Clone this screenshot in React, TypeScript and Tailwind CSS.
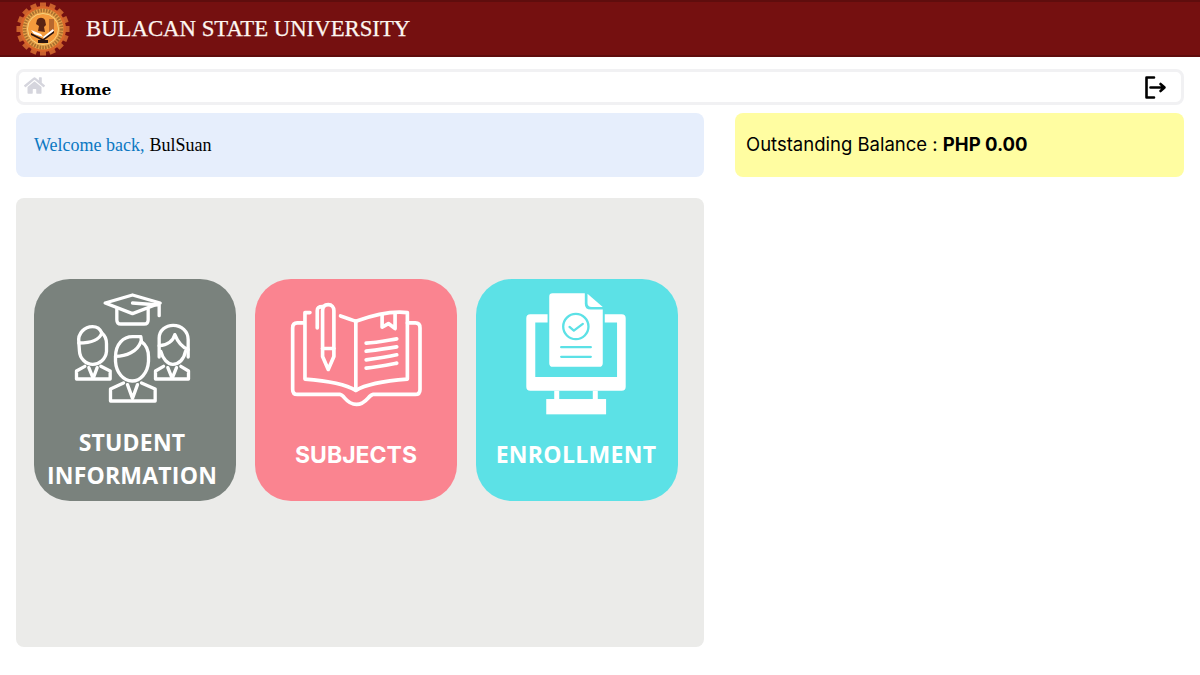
import { FaHome } from 'react-icons/fa'

const serif = "font-['Liberation_Serif',serif]"

function Logo() {
  const teeth = Array.from({ length: 16 }, (_, i) => i * 22.5)
  return (
    <svg viewBox="0 0 54 54" className="w-[54px] h-[54px] shrink-0">
      {teeth.map(a => (
        <rect key={a} x="24" y="0.5" width="6" height="5.5" fill="#c9602c" transform={`rotate(${a} 27 27)`} />
      ))}
      <circle cx="27" cy="27" r="23" fill="#d9662a" />
      <circle cx="27" cy="27" r="20.5" fill="#e9a24a" />
      <circle cx="27" cy="27" r="18.5" fill="none" stroke="#8a5a22" strokeWidth="3.5" strokeDasharray="1.6 1.2" opacity="0.7" />
      <circle cx="27" cy="27" r="15.5" fill="#f49a3c" />
      <circle cx="27" cy="27" r="15.5" fill="none" stroke="#f6d27a" strokeWidth="1" />
      <path d="M21 18c2-3 6-3 8 0l1 5-2 2 1 5-7-1 1-5-3-2z" fill="#5a2412" />
      <rect x="33" y="17" width="5" height="13" fill="#b8682e" />
      <path d="M15 28l10 4 2 3-9-3z" fill="#fff" />
      <path d="M27 35l10-8 1 2-10 8z" fill="#fff" />
      <path d="M15 31l12 6 11-8v2l-11 8-12-6z" fill="#2a1410" />
      <rect x="22" y="38" width="10" height="3" fill="#2a1410" />
    </svg>
  )
}

function StudentsIcon() {
  return (
    <svg viewBox="160 70 350 330" fill="none" stroke="#fff" strokeWidth="10" strokeLinejoin="round" strokeLinecap="round" className="w-[117px] h-[110px]">
      {/* cap */}
      <path d="M253 100 335 76 418 100 335 132Z" />
      <path d="M335 100 415 106V138" />
      <path d="M288 118V150Q288 163 300 163H370Q382 163 382 150V118" />
      {/* left student */}
      <path d="M174 218C170 190 192 171 215 171 228 171 238 178 243 190 253 198 257 208 257 222V245C255 268 236 284 216 284 195 284 177 266 176 245Z" />
      <path d="M174 220C205 220 235 212 243 190" />
      <path d="M192 290 167 304V328H268V304L240 290" />
      <path d="M204 294 217 326 229 294" />
      {/* centre student */}
      <path d="M284 262C284 222 308 201 335 201H360L362 216C376 226 383 242 383 262V275C381 310 358 334 334 334 307 334 286 308 284 275Z" />
      <path d="M284 260C315 260 350 246 360 216" />
      <path d="M308 340 269 358V394H403V358L362 340" />
      <path d="M320 345 335 386 350 345" />
      {/* right student */}
      <path d="M415 262V205C415 182 435 167 457 167 482 167 502 185 502 210V262" />
      <path d="M420 245C426 268 440 284 456 284 474 284 490 268 494 245" />
      <path d="M415 228C440 228 458 212 462 195 470 215 482 232 502 240" />
      <path d="M428 290 404 304V328H503V304L480 290" />
      <path d="M441 294 454 326 467 294" />
    </svg>
  )
}

function BookIcon() {
  return (
    <svg viewBox="120 90 400 320" fill="none" stroke="#fff" strokeWidth="11" strokeLinejoin="round" strokeLinecap="round" className="w-[133px] h-[107px]">
      <path d="M163 155H142Q128 155 128 170V355Q128 370 142 370H270C285 372 288 400 320 400 350 400 355 372 370 370H497Q511 370 511 355V170Q511 155 497 155H473" />
      <path d="M180 124H165V324C220 328 280 335 318 358 355 335 420 328 473 324V124C440 120 390 124 318 150 305 145 290 140 272 134" />
      <path d="M318 150V358" />
      <path d="M397 130V168L416 157 436 172V125" />
      <path d="M349 216C380 214 410 208 441 203M349 240C380 236 410 232 441 227M349 266C380 262 410 258 441 251M349 291C380 288 410 282 441 276" />
      {/* pen */}
      <path d="M202 170V118C202 108 208 106 218 106" />
      <path d="M218 256V118C218 106 224 100 235 100 246 100 252 108 252 118V256L235 295Z" />
      <path d="M218 232H252" />
    </svg>
  )
}

function EnrollIcon() {
  return (
    <svg viewBox="165 65 305 370" className="w-[102px] h-[123px]">
      <path fillRule="evenodd" fill="#fff" d="M180 132H232V157H195V321H441V157H404V132H455Q467 132 467 144V350Q467 362 455 362H180Q168 362 168 350V144Q168 132 180 132Z" />
      <rect x="252" y="362" width="15" height="26" fill="#fff" />
      <rect x="368" y="362" width="15" height="26" fill="#fff" />
      <rect x="228" y="387" width="180" height="46" fill="#fff" />
      <path fill="#fff" d="M247 69H344V100Q344 118 362 118H398V279Q398 290 387 290H248Q237 290 237 279V79Q237 69 247 69Z" />
      <path fill="#fff" d="M352 70 398 110H365Q352 110 352 97Z" />
      <circle cx="317" cy="169" r="38" fill="none" stroke="#5ce1e6" strokeWidth="7" />
      <path d="M298 170 311 181 338 161" fill="none" stroke="#5ce1e6" strokeWidth="7" strokeLinecap="round" strokeLinejoin="round" />
      <path d="M273 231H362M273 260H362" stroke="#5ce1e6" strokeWidth="7" strokeLinecap="round" />
    </svg>
  )
}

function LogoutIcon() {
  return (
    <svg viewBox="0 0 24 24" fill="none" stroke="#000" strokeWidth="2.6" strokeLinecap="round" strokeLinejoin="round" className="w-6 h-6">
      <path d="M11 2.5H3.5V22.5H11" />
      <path d="M7.5 12.5H21.5M17.5 9 21.5 12.5 17.5 16" />
    </svg>
  )
}

const tiles = [
  { label: ['STUDENT', 'INFORMATION'], bg: 'bg-[#7a827d] pr-[6px]', Icon: StudentsIcon, iconBox: 'pt-[14px] h-[137px]', text: "pt-[10px] font-['Open_Sans',sans-serif] tracking-[0.2px]" },
  { label: ['SUBJECTS'], bg: 'bg-[#fa8490]', Icon: BookIcon, iconBox: 'pt-[22px] h-[137px]', text: "pt-[23px] font-['Inter',sans-serif]" },
  { label: ['ENROLLMENT'], bg: 'bg-[#5ce1e6] pr-[2px]', Icon: EnrollIcon, iconBox: 'pt-[13px] h-[137px]', text: "pt-[22px] font-['Open_Sans',sans-serif] tracking-[0.3px]" },
]

export default function App() {
  return (
    <div className="h-[675px] w-[1200px] bg-white overflow-hidden">
      <header className="h-[57px] bg-[#751010] border-t-2 border-b-2 border-t-[#5f0d0d] border-b-[#5f0d0d] flex items-center pl-4 gap-4">
        <Logo />
        <span className={`${serif} text-[#fdf6f0] text-[22.75px] mt-[2px] [-webkit-text-stroke:0.25px_#fdf6f0]`}>BULACAN STATE UNIVERSITY</span>
      </header>

      <div className="px-4">
        <nav className="mt-3 h-9 bg-white border-[3px] border-[#f1f1f3] rounded-lg flex items-center pl-[5px] pr-[14px]">
          <FaHome className="text-[#d5d5dd] w-[21px] h-[21px] -mt-[4px]" />
          <span className="font-['DejaVu_Serif',serif] font-bold text-[15.5px] text-black ml-[15px] mt-[5px]">Home</span>
          <span className="ml-auto"><LogoutIcon /></span>
        </nav>

        <div className="mt-2 flex gap-[31px]">
          <div className="flex flex-col w-[688px]">
            <div className={`${serif} h-16 bg-[#e6eefc] rounded-lg flex items-center pl-[18px] text-[18px]`}>
              <span className="text-[#0b78c2] mr-[5px]">Welcome back,</span>
              <span className="text-black">BulSuan</span>
            </div>

            <section className="mt-[21px] h-[449px] bg-[#ebebe9] rounded-lg flex items-start pt-[81px] pl-[18px] gap-[19px]">
              {tiles.map(({ label, bg, Icon, iconBox, text }) => (
                <div key={label[0]} className={`${bg} w-[202px] h-[222px] rounded-[36px] flex flex-col items-center`}>
                  <div className={`${iconBox} flex justify-center`}><Icon /></div>
                  <div className={`${text} font-bold text-white text-[23px] leading-[33px] text-center`}>
                    {label.map(l => <div key={l}>{l}</div>)}
                  </div>
                </div>
              ))}
            </section>
          </div>

          <div className="w-[449px] h-16 bg-[#fffda1] rounded-lg flex items-center pl-[11px] font-['Inter',sans-serif] text-[18.5px] text-black">
            Outstanding Balance :&nbsp;<b className="font-bold">PHP 0.00</b>
          </div>
        </div>
      </div>
    </div>
  )
}
